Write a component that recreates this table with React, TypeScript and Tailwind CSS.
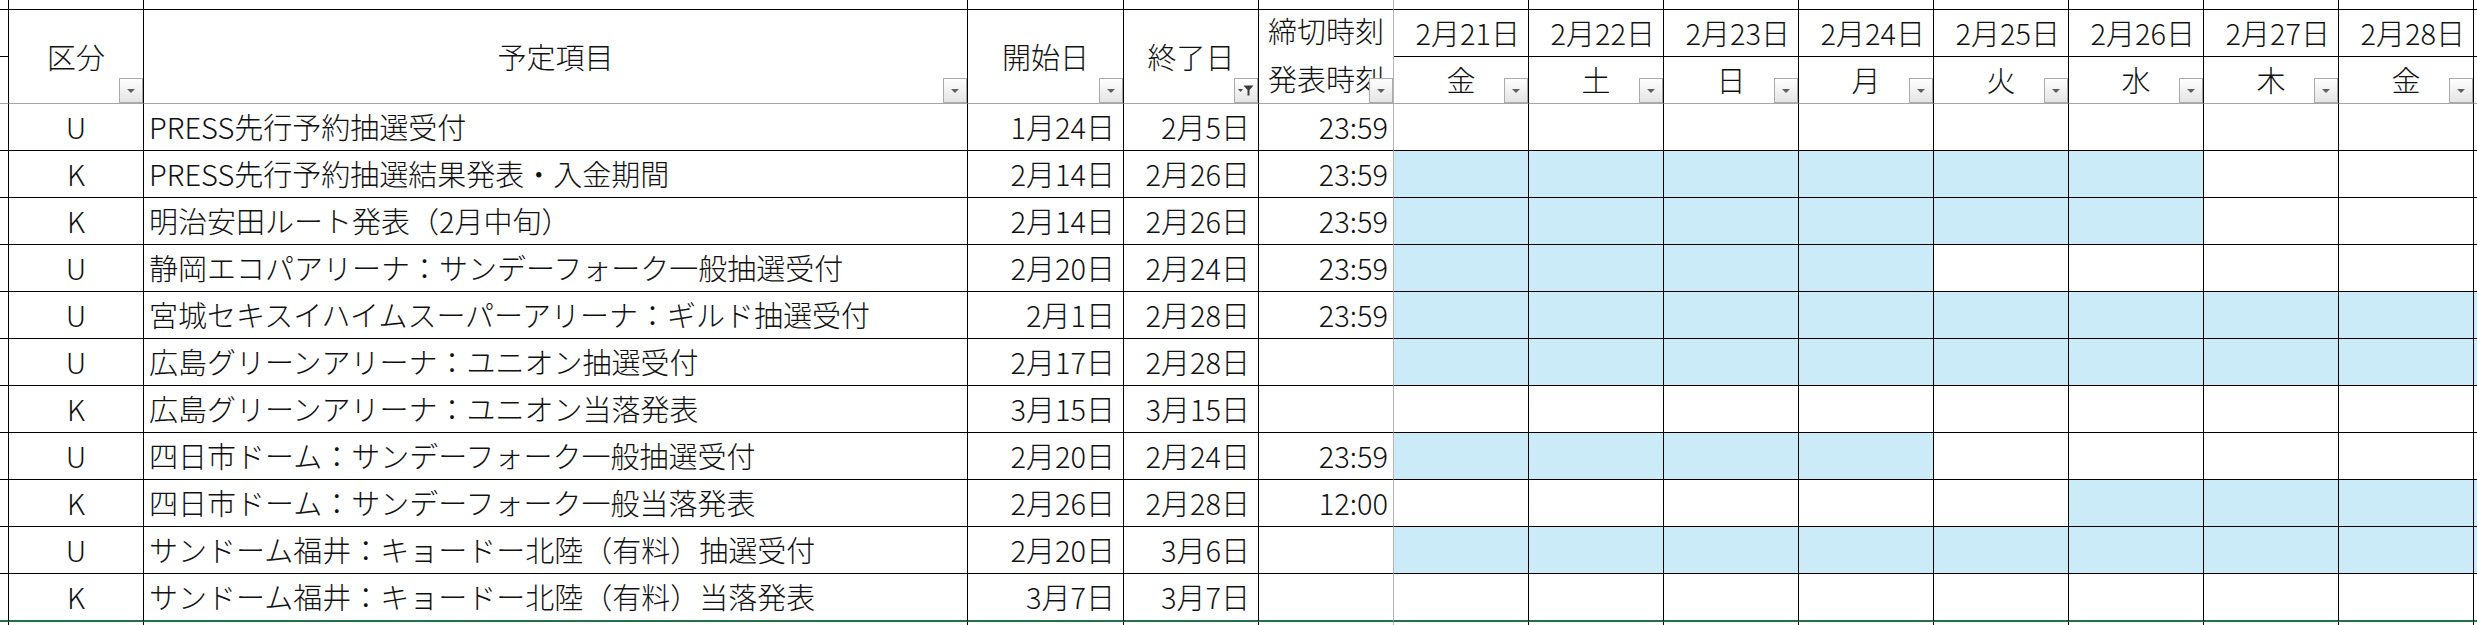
import React from "react";

type Row = {
  k: string;
  t: string;
  s: string;
  e: string;
  tm: string;
  f: [number, number] | null;
};

const days = [
  { d: "2月21日", w: "金" },
  { d: "2月22日", w: "土" },
  { d: "2月23日", w: "日" },
  { d: "2月24日", w: "月" },
  { d: "2月25日", w: "火" },
  { d: "2月26日", w: "水" },
  { d: "2月27日", w: "木" },
  { d: "2月28日", w: "金" },
];

const rows: Row[] = [
  { k: "U", t: "PRESS先行予約抽選受付", s: "1月24日", e: "2月5日", tm: "23:59", f: null },
  { k: "K", t: "PRESS先行予約抽選結果発表・入金期間", s: "2月14日", e: "2月26日", tm: "23:59", f: [0, 5] },
  { k: "K", t: "明治安田ルート発表（2月中旬）", s: "2月14日", e: "2月26日", tm: "23:59", f: [0, 5] },
  { k: "U", t: "静岡エコパアリーナ：サンデーフォーク一般抽選受付", s: "2月20日", e: "2月24日", tm: "23:59", f: [0, 3] },
  { k: "U", t: "宮城セキスイハイムスーパーアリーナ：ギルド抽選受付", s: "2月1日", e: "2月28日", tm: "23:59", f: [0, 8] },
  { k: "U", t: "広島グリーンアリーナ：ユニオン抽選受付", s: "2月17日", e: "2月28日", tm: "", f: [0, 8] },
  { k: "K", t: "広島グリーンアリーナ：ユニオン当落発表", s: "3月15日", e: "3月15日", tm: "", f: null },
  { k: "U", t: "四日市ドーム：サンデーフォーク一般抽選受付", s: "2月20日", e: "2月24日", tm: "23:59", f: [0, 3] },
  { k: "K", t: "四日市ドーム：サンデーフォーク一般当落発表", s: "2月26日", e: "2月28日", tm: "12:00", f: [5, 8] },
  { k: "U", t: "サンドーム福井：キョードー北陸（有料）抽選受付", s: "2月20日", e: "3月6日", tm: "", f: [0, 8] },
  { k: "K", t: "サンドーム福井：キョードー北陸（有料）当落発表", s: "3月7日", e: "3月7日", tm: "", f: null },
];

function FilterBtn({ active }: { active?: boolean }) {
  return (
    <div className="absolute right-0 bottom-0 w-[24px] h-[25px] border border-[#ababab] bg-linear-to-b from-[#ffffff] to-[#e4e4e4] flex items-center justify-center">
      {active ? (
        <svg width="16" height="11" viewBox="0 0 16 11">
          <path d="M0 4h5L2.5 7z" fill="#4a4a4a" />
          <path d="M5.5 0.5h10l-4 4.5v5.5h-2v-5.5z" fill="#3a3a3a" />
        </svg>
      ) : (
        <svg width="8" height="4" viewBox="0 0 8 4">
          <path d="M0 0h8L4 4z" fill="#606060" />
        </svg>
      )}
    </div>
  );
}

const cell = "relative overflow-hidden whitespace-nowrap border-r border-b";

export default function App() {
  const top = Array.from({ length: 15 });
  return (
    <div className="w-[2477px] h-[625px] overflow-hidden bg-white text-[#111] font-['Noto_Sans_CJK_JP','Noto_Sans',sans-serif] font-light text-[29px]">
      <div className="grid h-full grid-cols-[9px_135px_824px_156px_135px_135px_repeat(8,135px)_1fr] grid-rows-[10px_47px_47px_repeat(10,47px)_48px_1fr]">
        {/* top partial row */}
        {top.map((_, i) => (
          <div
            key={"t" + i}
            className={`border-b border-b-black ${i === 14 ? "" : "border-r"} ${i === 5 ? "border-r-[#b4b4b4]" : "border-r-black"}`}
          />
        ))}

        {/* header row 1 */}
        <div className="border-r border-b border-r-black border-b-black" />
        <div className={`${cell} row-span-2 border-r-black border-b-[#a6a6a6] flex items-center justify-center`}>
          区分
          <FilterBtn />
        </div>
        <div className={`${cell} row-span-2 border-r-black border-b-[#a6a6a6] flex items-center justify-center`}>
          予定項目
          <FilterBtn />
        </div>
        <div className={`${cell} row-span-2 border-r-black border-b-[#a6a6a6] flex items-center justify-center`}>
          開始日
          <FilterBtn />
        </div>
        <div className={`${cell} row-span-2 border-r-black border-b-[#a6a6a6] flex items-center justify-center`}>
          終了日
          <FilterBtn active />
        </div>
        <div className={`${cell} row-span-2 border-r-[#b4b4b4] border-b-[#a6a6a6] flex flex-col items-center justify-center pb-[5px]`}>
          <span className="leading-[48px]">締切時刻</span>
          <span className="leading-[48px]">発表時刻</span>
          <FilterBtn />
        </div>
        {days.map((d) => (
          <div key={d.d} className={`${cell} border-r-black border-b-black flex items-center justify-end pr-[8px]`}>
            {d.d}
          </div>
        ))}
        <div className="border-b border-b-black" />

        {/* header row 2 */}
        <div className="border-r border-b border-r-black border-b-[#a6a6a6]" />
        {days.map((d, i) => (
          <div key={"w" + i} className={`${cell} border-r-black border-b-[#a6a6a6] flex items-center justify-center`}>
            {d.w}
            <FilterBtn />
          </div>
        ))}
        <div className="border-b border-b-[#a6a6a6]" />

        {/* data rows */}
        {rows.map((r, ri) => {
          const last = ri === rows.length - 1;
          const bb = last ? "border-b-2 border-b-[#217346]" : "border-b border-b-black";
          const c = `relative overflow-hidden whitespace-nowrap border-r ${bb}`;
          const filled = (i: number) => r.f !== null && i >= r.f[0] && i <= r.f[1];
          return (
            <React.Fragment key={"r" + ri}>
              <div className={`border-r border-r-black ${bb}`} />
              <div className={`${c} border-r-black flex items-center justify-center`}>{r.k}</div>
              <div className={`${c} border-r-black flex items-center pl-[5px]`}>{r.t}</div>
              <div className={`${c} border-r-black flex items-center justify-end pr-[8px]`}>{r.s}</div>
              <div className={`${c} border-r-black flex items-center justify-end pr-[8px]`}>{r.e}</div>
              <div className={`${c} border-r-[#b4b4b4] flex items-center justify-end pr-[5px]`}>{r.tm}</div>
              {days.map((_, di) => (
                <div
                  key={"c" + di}
                  className={`${c} border-r-black ${filled(di) ? "bg-[#cbebf9]" : "bg-white"}`}
                />
              ))}
              <div className={`${bb} ${filled(8) ? "bg-[#cbebf9]" : "bg-white"}`} />
            </React.Fragment>
          );
        })}

        {/* bottom partial row */}
        {top.map((_, i) => (
          <div
            key={"b" + i}
            className={`${i === 14 ? "" : "border-r"} ${i === 5 ? "border-r-[#b4b4b4]" : "border-r-black"}`}
          />
        ))}
      </div>
    </div>
  );
}
